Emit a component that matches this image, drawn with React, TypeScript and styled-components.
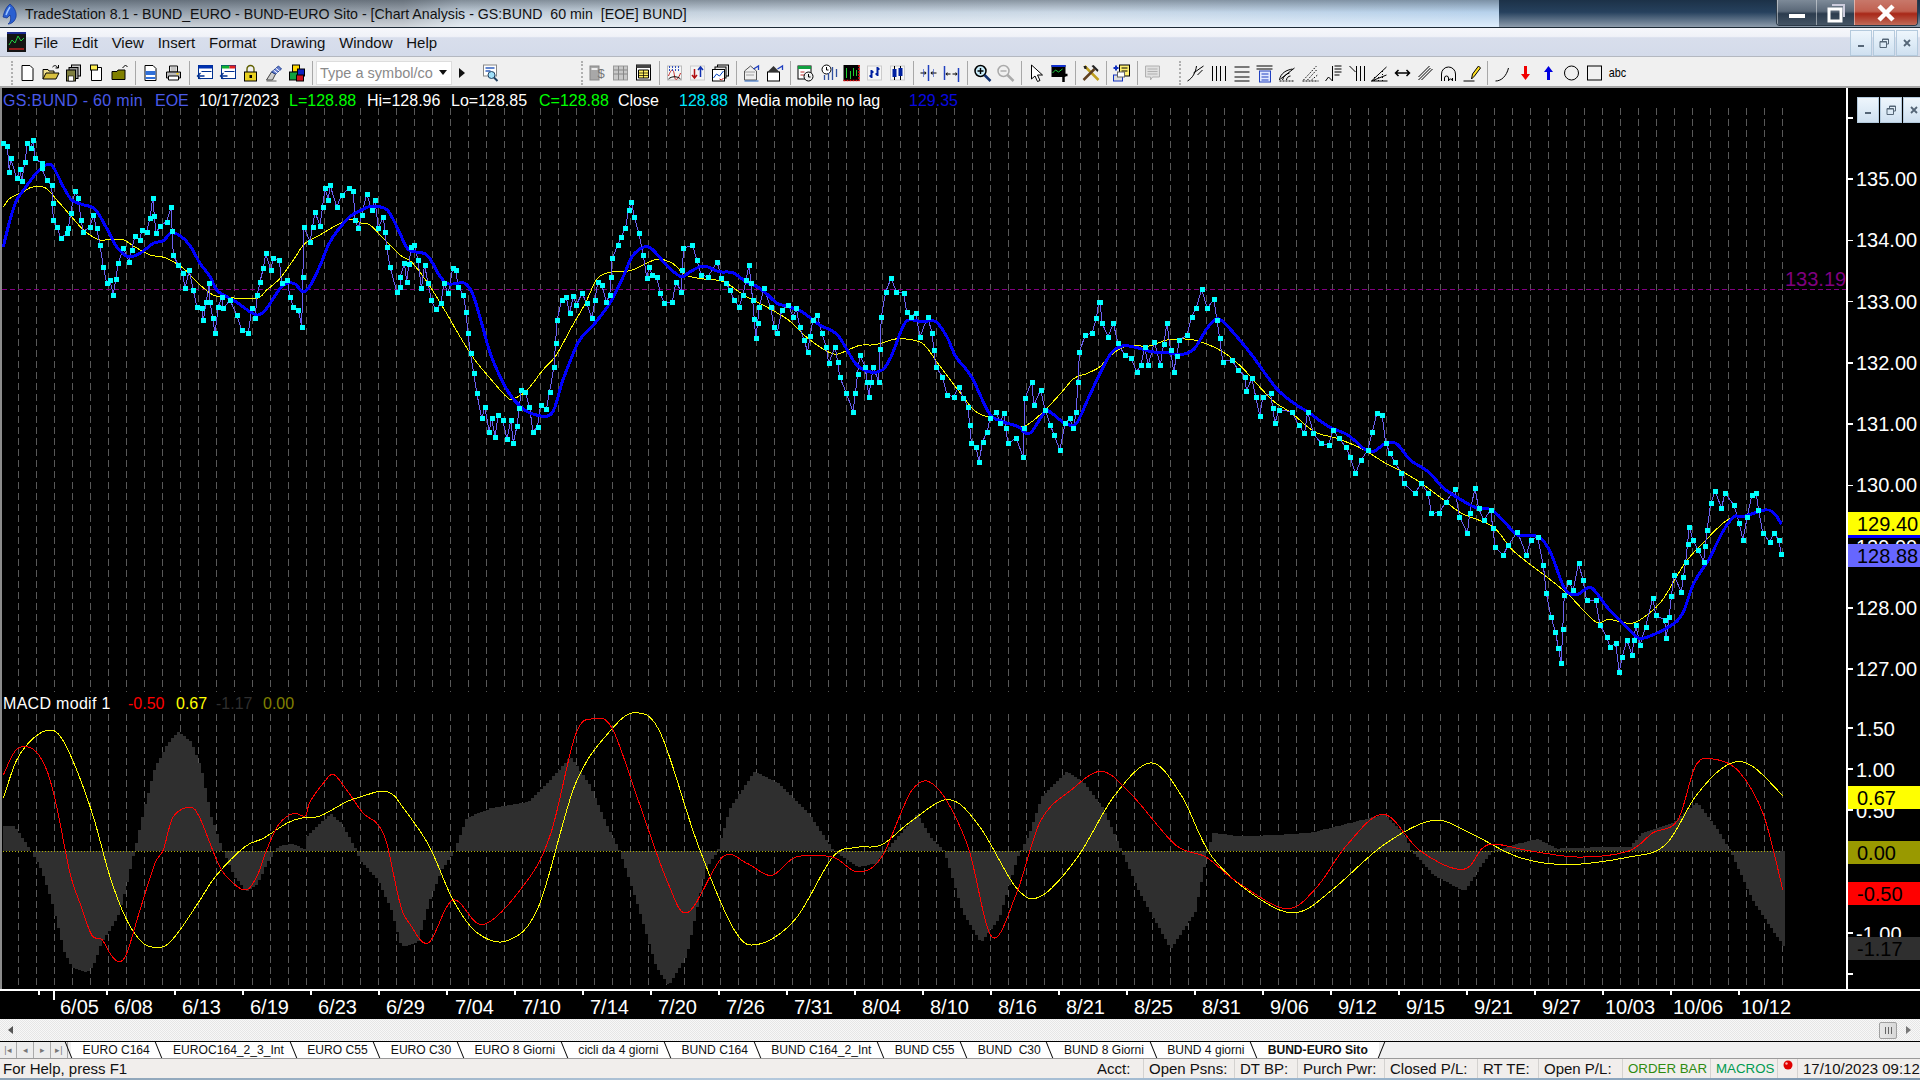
import React from 'react';
import styled, { createGlobalStyle } from 'styled-components';

const GlobalStyle = createGlobalStyle`
  html, body { margin: 0; padding: 0; background: #000; }
  body { font-family: "Liberation Sans", Arial, sans-serif; overflow: hidden; }
`;

// ---- chart data, read off the screen in three crops of different scale ----
type Pt = [number, number];
const crop = (ox: number, oy: number, sx: number, sy: number) => (flat: number[]): Pt[] => {
  const out: Pt[] = [];
  for (let i = 0; i < flat.length; i += 2) out.push([ox + flat[i] / sx, oy + flat[i + 1] / sy]);
  return out;
};
const left = crop(0, 120, 3, 3);
const mid = crop(400, 160, 2.24, 3);
const right = crop(1100, 260, 2.24, 3);
const macdLeft = crop(0, 690, 3, 3);
const macdRest = crop(0, 0, 1 / 1.2245, 1 / 1.2245);

const PRICE: Pt[] = [
  ...left([10,70,22,78,28,155,32,115,50,175,60,148,65,183,75,125,82,70,92,85,100,60,105,115,125,130,125,145,140,180,155,195,160,300,170,320,183,355,200,340,205,325,212,280,225,212,235,235,243,300,250,335,270,320,280,285,290,325,300,375,310,440,320,490,330,480,340,525,355,430,370,385,388,425,395,390,405,348,420,360,425,330,440,335,450,295,458,233,468,340,480,318,500,305,513,262,520,405,535,435,548,460,555,505,568,450,580,510,590,560,605,565,610,600,628,490,630,545,645,640,655,560,665,530,670,565,690,540,710,585,725,630,745,640,755,565,765,595,772,525,780,485,790,445,797,400,812,450,820,415,838,420,845,490,862,480,870,530,880,560,895,570,905,620,912,320,930,365,945,275,960,318,975,205,985,240,990,195,1010,260,1025,225,1048,205,1060,212,1065,300,1075,325,1085,285,1100,222,1115,270,1125,240,1135,325,1150,290,1160,380,1170,440,1190,515,1200,500]),
  ...mid([0,350,10,310,15,365,25,260,32,255,40,300,48,385,55,315,70,420,80,448,92,430,98,370,108,400,118,325,125,330,130,380,142,405,148,455,152,520,158,580,172,700,183,775,190,742,200,815,205,775,213,830,220,765,230,780,240,838,248,780,254,848,262,798,272,690,280,695,290,740,298,815,308,800,315,735,328,748,335,695,345,620,352,480,362,420,372,410,380,460,388,408,395,435,408,400,418,430,430,475,443,365,452,375,462,425,470,405,475,295,488,255,495,230,505,205,512,150,518,125,525,170,535,220,545,285,553,355,558,320,565,345,575,350,583,400,592,430,610,425,618,365,630,395,635,265,655,255,665,300,675,345,690,350,710,305,720,355,730,370,740,390,748,420,760,440,768,405,782,315,790,420,797,535,805,440,815,385,830,440,838,500,845,520,855,450,870,435,880,470,888,445,895,500,905,540,913,575,925,480,935,465,945,520,955,560,960,610,975,560,985,650,1000,700,1015,755,1020,700,1030,585,1042,620,1050,710,1060,620,1072,665,1078,470,1088,395,1100,355,1112,395,1128,400,1135,455,1145,470,1155,460,1165,530,1182,470,1192,520,1200,620,1215,650,1225,705,1240,710,1252,680,1262,715,1272,740,1280,850,1290,860,1297,905,1305,845,1315,815,1322,775,1335,755,1345,790,1352,760,1362,850,1380,835,1396,890,1400,715,1415,665,1420,735,1435,690,1445,750,1457,795,1465,825,1478,870,1490,790,1500,775,1508,805,1515,755,1522,575,1535,525,1550,520,1560,475,1565,425]),
  ...right([0,125,5,190,18,230,30,190,40,250,55,285,70,295,82,335,92,315,100,262,108,315,122,245,135,315,150,190,158,270,165,335,178,240,195,225,205,170,215,145,228,88,240,145,255,118,262,180,268,235,275,305,295,300,310,330,325,350,328,393,340,355,358,468,365,410,382,400,392,490,400,450,430,455,445,495,458,520,465,455,478,520,495,550,512,555,522,510,535,535,550,560,560,590,572,640,585,600,600,570,620,460,632,465,640,550,650,580,660,605,675,640,680,670,705,700,720,670,735,700,742,760,760,758,775,725,795,688,805,770,823,820,828,760,840,685,848,745,860,780,875,750,885,860,903,885,915,855,935,815,955,885,965,840,980,830,993,915,1000,1000,1010,1070,1020,1115,1033,1210,1040,1005,1050,965,1060,990,1072,910,1082,960,1090,1020,1110,1020,1120,1095,1135,1130,1142,1160,1155,1150,1163,1235,1170,1190,1180,1140,1192,1185,1200,1095,1210,1155,1222,1100,1238,1015,1245,1065,1265,1080,1268,1135,1275,1070,1285,945,1302,995,1312,905,1320,800,1328,840,1340,870,1352,905,1360,810,1368,730,1378,692,1392,745,1400,700,1420,735,1432,790,1440,840,1450,770,1460,705,1470,700,1475,750,1485,820,1500,845,1510,820,1520,840,1526,882]),
];

const BLUE_MA: Pt[] = [
  ...left([10,380,30,300,50,240,75,205,100,170,130,140,150,133,165,150,190,200,215,240,245,253,285,268,320,325,350,380,385,410,420,400,460,370,490,362,516,338,550,355,575,385,600,430,630,470,650,510,680,530,710,547,750,575,775,585,800,565,840,505,860,490,885,492,910,515,935,490,965,425,985,375,1010,335,1050,290,1085,270,1110,260,1155,265,1175,290,1200,340]),
  ...mid([20,270,60,285,90,350,110,372,145,370,165,410,185,500,205,590,240,690,270,740,300,763,340,760,365,660,400,545,430,500,470,430,500,350,520,290,545,262,565,268,600,320,630,350,650,335,680,318,715,335,745,338,775,365,800,380,820,400,845,430,870,440,900,455,940,495,980,525,1020,610,1050,635,1080,630,1100,590,1125,505,1140,480,1170,485,1200,485,1225,530,1245,590,1280,650,1320,760,1350,785,1385,800,1400,818,1415,815,1445,755,1460,760,1490,790,1515,790,1540,720,1568,640]),
  ...right([25,280,50,258,80,262,115,275,150,278,180,284,210,268,240,205,263,176,290,205,340,285,395,385,440,435,465,455,510,498,555,525,590,565,612,575,640,550,665,552,695,600,735,635,770,685,800,712,840,742,880,752,930,820,950,827,985,832,1010,880,1035,970,1050,1000,1070,1003,1095,982,1110,995,1135,1040,1160,1075,1190,1115,1215,1135,1275,1100,1305,1060,1330,970,1365,895,1395,815,1420,770,1440,770,1490,750,1510,760,1526,792]),
];

const YELLOW_MA: Pt[] = [
  ...left([10,262,30,235,70,215,95,202,135,203,175,245,210,285,250,330,270,345,300,360,365,358,400,378,450,405,495,413,550,445,595,490,640,525,690,533,770,535,800,510,840,475,880,420,915,370,960,345,1010,315,1055,297,1085,310,1110,315,1150,355,1200,405]),
  ...mid([25,305,60,365,100,450,130,520,165,595,205,660,240,712,255,716,285,690,320,630,350,585,385,500,415,430,440,360,465,338,500,335,525,328,575,298,610,310,640,345,680,357,725,365,770,405,820,440,870,480,905,525,945,565,975,583,1000,572,1030,556,1065,554,1100,540,1125,536,1170,550,1205,610,1250,690,1290,755,1330,775,1385,800,1410,790,1445,750,1480,700,1510,655,1540,640,1568,620]),
  ...right([25,285,60,258,110,258,150,240,200,238,240,252,280,280,320,325,350,370,390,425,430,460,480,515,530,535,585,565,640,610,680,637,720,670,770,720,810,760,880,800,920,865,960,910,1000,950,1050,1005,1110,1085,1140,1078,1190,1090,1225,1065,1260,1020,1310,910,1350,850,1395,790,1420,770,1440,768,1490,750]),
];

const HIST: Pt[] = [
  ...macdLeft([3,408,40,408,60,440,90,483,120,540,150,630,190,790,215,835,255,848,275,830,300,760,350,680,375,590,400,480,430,350,460,235,500,160,530,125,570,155,600,235,630,380,665,483,700,560,735,605,770,580,800,515,830,470,870,460,910,478,915,440,950,405,990,372,1020,400,1060,470,1075,510,1130,570,1170,660,1200,770]),
  ...macdRest([340,770,350,735,360,710,370,695,380,668,400,660,430,655,450,635,465,618,480,640,495,675,505,695,520,740,535,790,545,805,560,780,575,710,585,695,595,660,615,630,635,640,660,665,680,695,700,708,715,705,722,695,735,680,748,665,760,685,770,695,785,745,800,770,815,750,830,700,840,680,850,650,870,630,885,640,900,660,915,695,930,730,955,775,975,745,985,695,990,680,1010,683,1040,682,1070,680,1090,675,1130,665,1145,680,1152,695,1170,715,1195,728,1210,705,1218,695,1235,690,1255,685,1270,693,1300,692,1330,692,1340,680,1365,672,1385,655,1400,675,1412,695,1430,735,1455,772]),
];

const MACD_RED: Pt[] = [
  ...macdLeft([10,255,50,178,100,178,140,240,170,350,210,550,240,640,275,735,305,748,330,790,355,815,380,790,420,660,465,520,490,480,520,380,570,352,600,385,650,510,680,560,735,600,770,560,800,480,835,405,880,370,915,378,930,335,970,280,1000,253,1040,300,1090,370,1130,400,1160,460,1200,640]),
  ...macdRest([335,755,350,770,370,735,395,755,430,720,450,680,470,600,485,587,500,595,520,650,545,720,562,745,590,700,610,705,630,715,650,700,680,700,700,712,720,700,745,645,765,643,790,690,810,765,830,730,850,670,875,645,900,630,925,650,960,690,985,700,1010,720,1050,742,1075,725,1100,690,1130,665,1160,695,1195,710,1215,690,1250,695,1290,700,1330,695,1350,680,1370,670,1385,625,1400,620,1420,630,1440,665,1456,727]),
];

const MACD_YELLOW: Pt[] = [
  ...macdLeft([10,325,50,210,100,145,150,120,185,145,230,240,280,380,330,560,380,690,430,760,470,772,500,765,540,720,600,630,650,555,735,470,790,445,860,400,900,385,960,378,1040,335,1090,318,1145,303,1180,315,1200,340]),
  ...macdRest([350,690,370,735,390,762,415,768,440,740,470,640,500,595,520,582,540,600,570,690,600,760,620,771,650,750,680,700,700,692,720,690,745,670,775,653,800,675,830,725,850,732,880,700,910,650,940,623,965,650,990,700,1030,735,1060,745,1090,725,1130,690,1170,670,1200,680,1240,700,1280,706,1330,700,1360,690,1385,650,1410,625,1430,625,1456,650]),
];

const poly = (pts: Pt[]) => pts.map(([x, y]) => `${x.toFixed(1)},${y.toFixed(1)}`).join(' ');

// catmull-rom through the readings, the averages have no corners in the reference
const smooth = (pts: Pt[]) => {
  let d = `M${pts[0][0].toFixed(1)} ${pts[0][1].toFixed(1)}`;
  for (let i = 0; i < pts.length - 1; i++) {
    const p0 = pts[Math.max(i - 1, 0)];
    const p1 = pts[i];
    const p2 = pts[i + 1];
    const p3 = pts[Math.min(i + 2, pts.length - 1)];
    const c1x = p1[0] + (p2[0] - p0[0]) / 6;
    const c1y = p1[1] + (p2[1] - p0[1]) / 6;
    const c2x = p2[0] - (p3[0] - p1[0]) / 6;
    const c2y = p2[1] - (p3[1] - p1[1]) / 6;
    d += `C${c1x.toFixed(1)} ${c1y.toFixed(1)} ${c2x.toFixed(1)} ${c2y.toFixed(1)} ${p2[0].toFixed(1)} ${p2[1].toFixed(1)}`;
  }
  return d;
};

const priceY = (p: number) => 179 + (135 - p) * 61.25;
const macdY = (v: number) => 851 - v * 82;
const ZERO = macdY(0);

// closes: one dot per reading, plus one half way on the longer legs
const priceDots = (): Pt[] => {
  const out: Pt[] = [];
  PRICE.forEach((p, i) => {
    out.push(p);
    const n = PRICE[i + 1];
    if (n && Math.hypot(n[0] - p[0], n[1] - p[1]) > 30) out.push([(p[0] + n[0]) / 2, (p[1] + n[1]) / 2]);
  });
  return out;
};

// the histogram is a column every 3px, that is what gives it the stepped edge
const histPath = () => {
  let d = '';
  let seg = 0;
  for (let x = 3; x <= 1782; x += 3) {
    while (seg < HIST.length - 2 && HIST[seg + 1][0] < x) seg++;
    const [x0, y0] = HIST[seg];
    const [x1, y1] = HIST[seg + 1];
    const y = Math.round(y0 + ((y1 - y0) * (x - x0)) / (x1 - x0));
    d += `M${x} ${ZERO}V${y}h3V${ZERO}z`;
  }
  return d;
};

const GRID_X = Array.from({ length: 99 }, (_, i) => (i + 1) * 18);
const TIME_LABELS: [string, number][] = [
  ['6/05', 60], ['6/08', 114], ['6/13', 182], ['6/19', 250], ['6/23', 318], ['6/29', 386], ['7/04', 455], ['7/10', 522],
  ['7/14', 590], ['7/20', 658], ['7/26', 726], ['7/31', 794], ['8/04', 862], ['8/10', 930], ['8/16', 998], ['8/21', 1066],
  ['8/25', 1134], ['8/31', 1202], ['9/06', 1270], ['9/12', 1338], ['9/15', 1406], ['9/21', 1474], ['9/27', 1542],
  ['10/03', 1605], ['10/06', 1673], ['10/12', 1741],
];
const TIME_TICKS = [39, ...Array.from({ length: 25 }, (_, i) => 107 + i * 68)];

// ---- window chrome ----
const Page = styled.div`
  width: 1920px;
  height: 1080px;
  display: flex;
  flex-direction: column;
  overflow: hidden;
  background: #f0f0f0;
`;

const TitleBar = styled.div`
  height: 27px;
  flex: none;
  display: flex;
  align-items: center;
  border-bottom: 1px solid #1d2a36;
  background:
    linear-gradient(180deg, rgba(30,40,50,.42) 0, rgba(120,130,140,.12) 45%, rgba(255,255,255,.5) 100%),
    linear-gradient(90deg, #96a4b2 0, #9fa8b2 21%, #c9d6e2 24%, #d6e4f2 55%, #bfdcf8 77%, #bfdcf8 78.05%, #1b3857 78.1%, #1b3857 100%);
`;

const AppIcon = styled.svg`
  width: 18px;
  height: 22px;
  margin-left: 1px;
  flex: none;
`;

const TitleText = styled.span`
  margin-left: 6px;
  font-size: 14.2px;
  color: #111;
  white-space: pre;
  flex: 1;
`;

const WinButtons = styled.div`
  display: flex;
  height: 25px;
  margin: 0 2px 2px 0;
  align-self: flex-start;
  border: 1px solid #2c3a48;
  border-top: 0;
  border-radius: 0 0 4px 4px;
  overflow: hidden;
`;

const WinButton = styled.div<{ $w: number; $close?: boolean }>`
  width: ${(p) => p.$w}px;
  display: flex;
  align-items: center;
  justify-content: center;
  border-left: 1px solid rgba(255,255,255,.45);
  background: ${(p) =>
    p.$close
      ? 'linear-gradient(180deg, #c8786a 0, #c06050 45%, #a82818 55%, #c06a58 100%)'
      : 'linear-gradient(180deg, #7d8a98 0, #5a6878 45%, #2c3c4e 55%, #445464 100%)'};
`;

const MenuBar = styled.div`
  height: 28px;
  flex: none;
  display: flex;
  align-items: center;
  border-bottom: 1px solid #b4b8c0;
  background: linear-gradient(180deg, #f6f7fb 0, #f0f2f8 30%, #d8deec 35%, #d4dbea 100%);
`;

const MenuIcon = styled.svg`
  width: 19px;
  height: 20px;
  margin-left: 7px;
  flex: none;
`;

const MenuItems = styled.div`
  display: flex;
  gap: 13.8px;
  margin-left: 8px;
  flex: 1;
`;

const MenuItem = styled.span`
  font-size: 15px;
  color: #111;
`;

const MdiButtons = styled.div`
  display: flex;
  gap: 1px;
  margin-right: 2px;
  align-self: flex-start;
  margin-top: 2px;
`;

const MdiButton = styled.div`
  width: 22px;
  height: 26px;
  display: flex;
  align-items: center;
  justify-content: center;
  border: 1px solid #b4cadd;
  box-sizing: border-box;
  background: linear-gradient(180deg, #eef6fc 0, #dfecf7 50%, #cfe0f0 100%);
`;

const Toolbar = styled.div`
  height: 27px;
  padding-top: 2px;
  flex: none;
  display: flex;
  align-items: center;
  background: #f0f0f0;
  border-bottom: 2px solid #a6a6a6;
`;

const ToolGroup = styled.div<{ $ml: number }>`
  display: flex;
  align-items: center;
  margin-left: ${(p) => p.$ml}px;
`;

const Grip = styled.i`
  width: 0;
  height: 24px;
  margin-right: 3px;
  border-left: 2px dotted #b0b0b0;
`;

const Tool = styled.svg`
  width: 20px;
  height: 20px;
  padding: 0 1.5px;
  flex: none;
`;

const Sep = styled.i`
  width: 1px;
  height: 24px;
  margin: 0 3.5px;
  background: #a8a8a8;
  flex: none;
`;

const SymbolBox = styled.div`
  width: 136px;
  height: 24px;
  display: flex;
  align-items: center;
  justify-content: space-between;
  padding: 0 4px 0 3px;
  box-sizing: border-box;
  border: 1px solid #ddd;
  background: #fff;
  font-size: 14.5px;
  color: #8a8a8a;
`;

const ComboArrow = styled.i`
  width: 0;
  height: 0;
  border: 4.5px solid transparent;
  border-top: 5px solid #111;
  border-bottom: 0;
`;

const GoArrow = styled.i`
  width: 0;
  height: 0;
  margin-left: 7px;
  margin-right: 13px;
  border: 5.5px solid transparent;
  border-left: 6px solid #111;
  border-right: 0;
`;

// ---- chart ----
const ChartArea = styled.div`
  position: relative;
  height: 931px;
  flex: none;
  background: #000;
`;

const ChartSvg = styled.svg`
  display: block;
  width: 1920px;
  height: 931px;
  background: #000;
  font-family: "Liberation Sans", Arial, sans-serif;
  .grid { stroke: #585858; stroke-width: 1; stroke-dasharray: 7 4; shape-rendering: crispEdges; }
  .axis { stroke: #fff; stroke-width: 1.5; fill: none; shape-rendering: crispEdges; }
  .level { stroke: #800080; stroke-width: 1; stroke-dasharray: 5 3; shape-rendering: crispEdges; }
  .zero { stroke: #b0b000; stroke-width: 1; stroke-dasharray: 1 2; shape-rendering: crispEdges; }
  .price { fill: none; stroke: #6a60f0; stroke-width: 1; shape-rendering: crispEdges; }
  .dot { fill: #00ffff; shape-rendering: crispEdges; }
  .blue { fill: none; stroke: #0000ff; stroke-width: 3; stroke-linejoin: round; shape-rendering: crispEdges; }
  .thin-yellow { fill: none; stroke: #ffff00; stroke-width: 1; shape-rendering: crispEdges; }
  .thin-red { fill: none; stroke: #ff0000; stroke-width: 1; shape-rendering: crispEdges; }
  .hist { fill: #2f2f2f; shape-rendering: crispEdges; }
  .label { fill: #fff; font-size: 20px; }
  .badge-text { fill: #000; font-size: 20px; }
  .level-text { fill: #800080; font-size: 20px; }
`;

const Legend = styled.div<{ $top: number }>`
  position: absolute;
  left: 3px;
  top: ${(p) => p.$top}px;
  display: flex;
  font-size: 16px;
  line-height: 18px;
  white-space: pre;
`;

const LegendItem = styled.span<{ $w?: number; $c: string; $wide?: boolean }>`
  color: ${(p) => p.$c};
  ${(p) => (p.$w ? `width: ${p.$w}px;` : '')}
  ${(p) => (p.$wide ? 'letter-spacing: .3px;' : '')}
  flex: none;
`;

const PaneButtons = styled.div`
  position: absolute;
  right: -5px;
  top: 9px;
  display: flex;
  gap: 1px;
`;

const ScrollBar = styled.div`
  height: 22px;
  flex: none;
  display: flex;
  align-items: center;
  justify-content: space-between;
  background: repeating-conic-gradient(#e6e6e6 0 25%, #f8f8f8 0 50%) 0 0 / 2px 2px;
`;

const ScrollRight = styled.div`
  display: flex;
  align-items: center;
  gap: 9px;
  margin-right: 9px;
`;

const ScrollLeftArrow = styled.i`
  width: 0;
  height: 0;
  margin-left: 8px;
  border: 4.5px solid transparent;
  border-right: 5px solid #555;
  border-left: 0;
`;

const ScrollRightArrow = styled.i`
  width: 0;
  height: 0;
  border: 4.5px solid transparent;
  border-left: 5px solid #777;
  border-right: 0;
`;

const ScrollThumb = styled.div`
  width: 18px;
  height: 17px;
  box-sizing: border-box;
  border: 1px solid #a0a0a0;
  border-radius: 2px;
  background: linear-gradient(90deg, #e8e8e8, #d8d8d8);
  display: flex;
  align-items: center;
  justify-content: center;
  gap: 2px;
  i { width: 1px; height: 7px; background: #666; }
`;

const TabStrip = styled.div`
  height: 16px;
  flex: none;
  display: flex;
  align-items: stretch;
  border-top: 1px solid #000;
  border-bottom: 1px solid #9a9a9a;
  background: #f0f0f0;
`;

const TabNav = styled.div`
  width: 69px;
  flex: none;
  display: flex;
  background: #ececec;
`;

const TabNavButton = styled.div`
  width: 17px;
  display: flex;
  align-items: center;
  justify-content: center;
  box-sizing: border-box;
  border-right: 1px solid #aaa;
  color: #777;
  font-size: 9px;
`;

const TabRow = styled.div`
  display: flex;
  margin-left: 2px;
`;

const Tab = styled.div<{ $active?: boolean }>`
  position: relative;
  padding: 0 11.6px;
  font-size: 12.1px;
  line-height: 16px;
  white-space: pre;
  background: #fff;
  font-weight: ${(p) => (p.$active ? 'bold' : 'normal')};
  color: #111;
  &::before {
    content: '';
    position: absolute;
    left: -3px;
    top: 0;
    width: 1px;
    height: 16px;
    background: #000;
    transform: skewX(22deg);
  }
  ${(p) =>
    p.$active
      ? `&::after {
    content: '';
    position: absolute;
    right: -3px;
    top: 0;
    width: 1px;
    height: 16px;
    background: #000;
    transform: skewX(-22deg);
  }`
      : ''}
`;

const StatusBar = styled.div`
  height: 19px;
  flex: none;
  display: flex;
  align-items: center;
  background: #f1eeec;
  font-size: 15px;
  color: #111;
`;

const StatusHelp = styled.span`
  flex: 1;
  padding-left: 3px;
`;

const StatusPanel = styled.div<{ $w: number; $plain?: boolean }>`
  width: ${(p) => p.$w}px;
  height: 19px;
  line-height: 20px;
  flex: none;
  box-sizing: border-box;
  padding-left: 5px;
  white-space: pre;
  border-left: ${(p) => (p.$plain ? '0' : '1px solid #d4d2d0')};
  svg { display: block; margin: 1px 0 0 0; }
`;

const StatusFlag = styled(StatusPanel)<{ $c: string }>`
  color: ${(p) => p.$c};
  font-size: 13.3px;
`;

const DesktopEdge = styled.div`
  height: 2px;
  flex: none;
  background: linear-gradient(90deg, #8aa0b4, #b4c8dc 40%, #9ab4cc 70%, #7a94ac);
`;

// ---- toolbar drawings, 20x20 ----
const k = { fill: 'none', stroke: '#000' };
const TOOLS: Record<string, React.ReactNode> = {
  newDoc: <path d="M4.5 2.5h8l3 3v12h-11z" fill="#fff" stroke="#000" />,
  open: (<><path d="M2.5 16V6.5h5l1 1.5h5v2" fill="#f0e090" stroke="#000" /><path d="M2.5 16l3-6h13l-3 6z" fill="#d8c040" stroke="#000" /><path d="M12 4c2-2 4-2 5 1" {...k} /><path d="M15 5h3V2" {...k} /></>),
  saveAll: (<><rect x="8" y="2" width="9" height="11" fill="#ccc" stroke="#000" /><rect x="5.500" y="4.500" width="9" height="11" fill="#999" stroke="#000" /><rect x="3" y="7" width="9" height="11" fill="#808040" stroke="#000" /><rect x="5" y="13" width="5" height="5" fill="#fff" stroke="#000" strokeWidth=".6" /></>),
  noteDoc: (<><path d="M5 6.500h5l1-2h4v13H5z" fill="#fff" stroke="#000" /><rect x="4" y="2" width="7" height="5" fill="#ffef50" stroke="#000" /></>),
  oliveFolder: (<><path d="M2.500 16.500V8.500h5l1-1.500h7v9.500z" fill="#808000" stroke="#000" /><path d="M13 5l3-3 2 2" {...k} /></>),
  preview: (<><path d="M4.500 2.500h8l3 3v12h-11z" fill="#fff" stroke="#000" /><rect x="5" y="8" width="10" height="4" fill="#3070d8" /><path d="M5 15h10" stroke="#3070d8" strokeWidth="2" /></>),
  printer: (<><path d="M6 3h8v6H6z" fill="#fff" stroke="#000" /><path d="M7 5h6M7 7h6" stroke="#888" /><path d="M3 9h14v6H3z" fill="#bbb" stroke="#000" /><path d="M5 13h10v4H5z" fill="#fff" stroke="#000" /><rect x="13" y="10" width="2" height="1.500" fill="#ffd000" /></>),
  winBlue: (<><rect x="4" y="2.500" width="14" height="13" fill="#fff" stroke="#003090" /><rect x="4" y="2.500" width="14" height="3" fill="#0030b0" /><path d="M7 8.500h10" stroke="#003090" /><path d="M10 13H3m3-3l-3 3 3 3" stroke="#003090" fill="none" strokeWidth="1.300" /></>),
  winGreen: (<><rect x="4" y="2.500" width="14" height="13" fill="#fff" stroke="#003090" /><rect x="4" y="2.500" width="8" height="3" fill="#10b030" /><rect x="12" y="2.500" width="6" height="3" fill="#e02020" /><path d="M7 8.500h10" stroke="#003090" /><path d="M10 13H3m3-3l-3 3 3 3" stroke="#003090" fill="none" strokeWidth="1.300" /></>),
  lock: (<><path d="M6.500 9V6a3.500 3.500 0 0 1 7 0v3" fill="none" stroke="#606000" strokeWidth="1.400" /><rect x="4" y="9" width="12" height="9" fill="#e8d020" stroke="#000" /><rect x="9" y="12" width="2.500" height="3" fill="#000" /></>),
  dish: (<><path d="M3 17l5-8 4 2-3 6z" fill="#ccc" stroke="#444" /><path d="M8 9l7-6 3 3-6 5z" fill="#6a80d0" stroke="#204090" /><path d="M10 7l5 4M12 5l5 4" stroke="#fff" /><path d="M3 18h10" stroke="#666" /></>),
  cubes: (<><rect x="6" y="2" width="7" height="7" fill="#ffd800" stroke="#000" /><rect x="11" y="6" width="7" height="7" fill="#1020c0" stroke="#000" /><rect x="3" y="9" width="8" height="8" fill="#10a040" stroke="#000" /><rect x="10" y="12" width="7" height="6" fill="#d01020" stroke="#000" /></>),
  findDoc: (<><rect x="4" y="2" width="13" height="11" fill="#fff" stroke="#888" /><path d="M6 5h9M6 8h5" stroke="#3060c0" strokeWidth="1.500" /><circle cx="12" cy="12" r="3.500" fill="#a0e0f8" stroke="#204060" /><path d="M14.500 14.500l3.500 3.500" stroke="#204060" strokeWidth="2" /></>),
  calcGrey: (<><rect x="2.500" y="3" width="9" height="14" fill="#a8a8a8" stroke="#888" /><text x="10" y="15" fontSize="13" fontFamily="Liberation Sans" fill="#777">$</text><path d="M4 6h6" stroke="#eee" strokeWidth="2" /></>),
  sheetGrey: (<><rect x="3" y="3" width="14" height="14" fill="#c8c8c8" stroke="#999" /><path d="M3 7h14M3 11h14M8 3v14M13 3v14" stroke="#888" /></>),
  sheetYellow: (<><rect x="3" y="2" width="14" height="15" fill="#fff" stroke="#000" /><rect x="3" y="2" width="14" height="3" fill="#444" /><path d="M5 7h10v8H5z" fill="#ffef60" stroke="#000" /><path d="M5 10h10M5 12.500h10M10 7v8" stroke="#000" strokeWidth=".7" /></>),
  wave: (<><rect x="3" y="3" width="14" height="14" fill="#f6f6f6" stroke="#bbb" /><path d="M4 13c3-8 5-8 6 0s5 0 6-3" fill="none" stroke="#c02020" /><path d="M4 16c3-3 9-3 12 0" fill="none" stroke="#000" /><path d="M5 3v6M8 3v6M11 3v6M14 3v6" stroke="#3050c0" strokeDasharray="2 1" /></>),
  updown: (<><rect x="3" y="3" width="14" height="14" fill="#f4f4f4" stroke="#ccc" /><path d="M7 6v9m-2.500-3L7 15l2.500-3" stroke="#b01010" fill="none" strokeWidth="1.500" /><path d="M13 14V4m-2.500 3L13 4l2.500 3" stroke="#1030b0" fill="none" strokeWidth="1.500" /></>),
  stack: (<><rect x="7" y="2" width="11" height="11" fill="#e8e8e8" stroke="#000" /><rect x="4.500" y="4" width="11" height="11" fill="#e8e8e8" stroke="#000" /><rect x="2" y="6.500" width="12" height="11.500" fill="#fff" stroke="#000" /><path d="M3 15l3-4 3 2 4-5" stroke="#0040c0" fill="none" /><path d="M9 16l2 1 2-2" stroke="#c01010" fill="none" /></>),
  chartHome: (<><path d="M3 17V8l6-5 6 5v9z" fill="#eee" stroke="#555" /><path d="M4 9h10M5 12h8" stroke="#555" strokeDasharray="1 1" /><path d="M12 6l5-3v4" stroke="#2040c0" fill="none" strokeWidth="1.300" /><path d="M3 18h14" stroke="#2060c0" /></>),
  chartHomeDark: (<><rect x="3" y="9" width="12" height="9" fill="#fff" stroke="#000" /><path d="M3 9l6-6 6 6z" fill="#333" /><path d="M13 6l5-3v4" stroke="#2040c0" fill="none" strokeWidth="1.300" /></>),
  calClock: (<><rect x="2.500" y="3" width="13" height="13" fill="#fff" stroke="#000" /><rect x="2.500" y="3" width="13" height="3" fill="#10a040" /><path d="M5 9h4M5 12h4" stroke="#c03030" /><circle cx="13" cy="13.500" r="4.500" fill="#eee" stroke="#000" /><path d="M13 11v3h2" stroke="#000" fill="none" /></>),
  clockBars: (<><circle cx="8" cy="6.500" r="4.500" fill="#fff" stroke="#000" /><path d="M8 4v3h2" {...k} /><path d="M6 12v5M10 10v7M14 4v13M18 6v8" stroke="#3050a0" strokeWidth="1.300" /></>),
  darkBars: (<><rect x="2" y="2" width="16" height="16" fill="#000" /><path d="M5 5v10M9 8v8M12 5v8M15 7v6" stroke="#20d030" /><path d="M2 17.500h16M17.500 2v16" stroke="#e01010" strokeWidth="1.500" strokeDasharray="2 1" /></>),
  bars: (<><rect x="3" y="3" width="14" height="14" fill="#f6f6f6" stroke="#ccc" /><path d="M7 7v8M5 13h2M7 9h2M13 4v9M11 11h2M13 6h2" stroke="#0020a0" strokeWidth="2" fill="none" /></>),
  candles: (<><rect x="3" y="3" width="14" height="14" fill="#f6f6f6" stroke="#ccc" /><path d="M7 3v14M13 3v14" stroke="#000" /><rect x="5" y="6" width="4" height="8" fill="#0020a0" /><rect x="11" y="5" width="4" height="8" fill="#0020a0" /></>),
  barsIn: (<><path d="M10 2v16" stroke="#2040c0" strokeWidth="1.500" /><path d="M2 10h4M18 10h-4" stroke="#000" /><path d="M6 8v4l2-2zM14 8v4l-2-2z" /><path d="M5 6v8M15 6v8" stroke="#2040c0" opacity=".6" /></>),
  barsOut: (<><path d="M3 3v14M17 5v14" stroke="#2040c0" strokeWidth="1.500" /><path d="M6 11h3M11 11h3" stroke="#000" /><path d="M6 9v4l-2-2zM14 9v4l2-2z" /></>),
  zoomIn: (<><circle cx="8" cy="8" r="5.500" fill="#c8ecfa" stroke="#000" strokeWidth="1.500" /><path d="M5 8h6M8 5v6" stroke="#000" strokeWidth="1.400" /><path d="M12 12l6 6" stroke="#103070" strokeWidth="2.500" /></>),
  zoomOut: (<><circle cx="8" cy="8" r="5.500" fill="#f0f0f0" stroke="#aaa" strokeWidth="1.500" /><path d="M5 8h6" stroke="#aaa" strokeWidth="1.400" /><path d="M12 12l6 6" stroke="#aaa" strokeWidth="2.500" /></>),
  pointer: <path d="M5 2v14l3.500-3 2.500 5.500 2.500-1L11 12h5z" fill="#fff" stroke="#000" />,
  darkText: (<><rect x="2" y="2" width="14" height="12" fill="#000" /><rect x="2" y="2" width="14" height="2" fill="#1030d0" /><path d="M3 10l3-3 3 2 4-3" stroke="#20d040" fill="none" /><path d="M10 12h8M14 12v7" stroke="#000" strokeWidth="2.500" /></>),
  tools: (<><path d="M4 3l14 14" stroke="#c0a020" strokeWidth="2.500" /><path d="M3 17L14 6" stroke="#604020" strokeWidth="2.500" /><path d="M11 3l6 6 1-2-5-5z" fill="#222" /><path d="M3 3l3 0 0 3-2 0z" fill="#222" /></>),
  listDoc: (<><rect x="8" y="2" width="10" height="11" fill="#ffef70" stroke="#000" /><path d="M10 5h6M10 8h6" stroke="#000" /><path d="M2 5h5M4.500 2.500v5" stroke="#1030c0" strokeWidth="2" /><rect x="2" y="12" width="9" height="6" fill="#ddd" stroke="#1030c0" /><rect x="6" y="9" width="7" height="5" fill="#fff" stroke="#666" /></>),
  noteGrey: (<><path d="M3 3h14v11h-7l-2 3v-3H3z" fill="#e0e0e0" stroke="#b0b0b0" /><path d="M5 6h10M5 8.500h10M5 11h10" stroke="#b0b0b0" /></>),
  trendCross: (<><path d="M2 18c5-3 8-8 9-15" {...k} /><path d="M8 10l10-7M12 12l5-5" {...k} /></>),
  vLines: <path d="M4 3v15M8 3v15M12 3v15M17 3v15" {...k} />,
  hLines: <path d="M3 4h15M3 9h15M3 14h15M3 18h15" {...k} />,
  calc: (<><path d="M2 3h16M2 6h16" {...k} /><rect x="5" y="8" width="11" height="11" fill="#e0e8ff" stroke="#2040c0" /><path d="M7 11h7M7 14h7M7 17h7" stroke="#2040c0" /></>),
  fanArc: (<><path d="M2 17c1-7 7-10 13-11" {...k} /><path d="M5 17c1-4 4-6 7-7M9 17c0-2 2-4 4-4M3 16l14-11" {...k} /><path d="M2 18h15" stroke="#000" strokeDasharray="2 1" /></>),
  fanDash: (<><path d="M3 17L16 3M7 17L16 7M11 17l6-5" stroke="#000" strokeDasharray="1.500 1.500" fill="none" /><path d="M2 18h16" stroke="#000" strokeDasharray="2 1" /></>),
  fibExt: (<><path d="M2 18l3-4 4 4V3" {...k} /><path d="M11 3h7M11 6h7M11 9h7M11 12h5" {...k} /></>),
  vGann: <path d="M3 3l6 6M10 3v15M14 3v15M18 3v15" {...k} />,
  fanSolid: (<><path d="M2 18L17 4M2 18l15-6M2 18h16" {...k} /><path d="M5 14v4M9 11v7M13 8v10" stroke="#000" strokeDasharray="1 2" /></>),
  arrowsH: <path d="M3 10h14M6 7l-3 3 3 3M14 7l3 3-3 3" stroke="#000" strokeWidth="1.500" fill="none" />,
  parallel: <path d="M3 14L14 3M6 17L17 6M3 17L15 5" stroke="#000" fill="none" />,
  arcs: <path d="M3 18v-7a7 7 0 0 1 14 0v7M6 18v-3a2 2 0 0 1 4 0v3a2 2 0 0 1 4 0v-3" {...k} />,
  pencil: (<><path d="M2 18h11" {...k} /><path d="M10 16l1-5 6-8 2 2-6 8z" fill="#ffe020" stroke="#000" /></>),
  curve: <path d="M3 18c6 0 11-5 13-13" stroke="#000" fill="none" />,
  arrowDown: <path d="M8.500 3h3v8h3L10 17l-4.500-6h3z" fill="#f00000" />,
  arrowUp: <path d="M8.500 17h3V9h3L10 3 5.500 9h3z" fill="#0000e0" />,
  circle: <circle cx="10" cy="10" r="7" {...k} />,
  square: <rect x="3" y="3" width="14" height="14" {...k} />,
  abc: <text x="10" y="14" textAnchor="middle" fontSize="12" fontFamily="Liberation Sans" fill="#000" transform="translate(1 0) scale(.9 1)">abc</text>,
};

const ToolIcon = ({ name }: { name: string }) => <Tool viewBox="0 0 20 20">{TOOLS[name]}</Tool>;
const ToolRun = ({ names }: { names: string[] }) => (
  <>
    {names.map((n, i) => (n === '|' ? <Sep key={i} /> : <ToolIcon key={i} name={n} />))}
  </>
);

const SmallButtonGlyphs = () => (
  <>
    <MdiButton><svg width="10" height="10" viewBox="0 0 10 10"><path d="M2 8h6" stroke="#567" strokeWidth="2" /></svg></MdiButton>
    <MdiButton><svg width="11" height="11" viewBox="0 0 11 11"><path d="M3.500 3V1h6v5H8M1 3.500h6.500v6H1z" fill="none" stroke="#567" /><path d="M1 4h6.500M3.500 1.500h6" stroke="#567" /></svg></MdiButton>
    <MdiButton><svg width="10" height="10" viewBox="0 0 10 10"><path d="M2 2l6 6M8 2L2 8" stroke="#567" strokeWidth="1.800" /></svg></MdiButton>
  </>
);

const TABS = [
  'EURO C164', 'EUROC164_2_3_Int', 'EURO C55', 'EURO C30', 'EURO 8 Giorni', 'cicli da 4 giorni',
  'BUND C164', 'BUND C164_2_Int', 'BUND C55', 'BUND  C30', 'BUND 8 Giorni', 'BUND 4 giorni',
];

const PRICE_LABELS = [135, 134, 133, 132, 131, 130, 129, 128, 127];
const PRICE_TICKS = [136, ...PRICE_LABELS];
const MACD_LABELS = [1.5, 1, 0.5, -1];
const MACD_TICKS = [1.5, 1, 0.5, 0, -0.5, -1, -1.5];

const Badge = ({ y, fill, text }: { y: number; fill: string; text: string }) => (
  <>
    <rect x="1848" y={y} width="72" height="23" fill={fill} />
    {text && <text className="badge-text" x="1857" y={y + 19}>{text}</text>}
  </>
);

const Chart = () => (
  <ChartSvg viewBox="0 88 1920 931">
    <rect x="0" y="88" width="2" height="902" fill="#8c8c8c" />
    {GRID_X.map((x) => (
      <g key={x}>
        <line className="grid" x1={x} x2={x} y1="108" y2="692" />
        <line className="grid" x1={x} x2={x} y1="714" y2="987" />
      </g>
    ))}
    <line className="level" x1="2" x2="1846" y1="289.500" y2="289.500" />
    <text className="level-text" x="1785" y="286">133.19</text>

    <path className="thin-yellow" d={smooth(YELLOW_MA)} />
    <polyline className="price" points={poly(PRICE)} />
    <path className="blue" d={smooth(BLUE_MA)} />
    {priceDots().map(([x, y], i) => (
      <rect key={i} className="dot" x={Math.round(x - 2)} y={Math.round(y - 2)} width="5" height="5" />
    ))}

    <path className="hist" d={histPath()} />
    <line className="zero" x1="3" x2="1782" y1={ZERO} y2={ZERO} />
    <path className="thin-yellow" d={smooth(MACD_YELLOW)} />
    <path className="thin-red" d={smooth(MACD_RED)} />

    <path className="axis" d="M1847 88V990M0 990H1920" />
    {PRICE_TICKS.map((p) => (
      <line key={p} className="axis" x1="1847" x2="1853" y1={priceY(p)} y2={priceY(p)} />
    ))}
    {PRICE_LABELS.map((p) => (
      <text key={p} className="label" x="1856" y={priceY(p) + 7}>{p.toFixed(2)}</text>
    ))}
    {MACD_TICKS.map((v) => (
      <line key={v} className="axis" x1="1847" x2="1853" y1={macdY(v)} y2={macdY(v)} />
    ))}
    {MACD_LABELS.map((v) => (
      <text key={v} className="label" x="1856" y={macdY(v) + 8}>{v.toFixed(2)}</text>
    ))}

    <rect x="1848" y="515" width="72" height="23" fill="#0000ff" />
    <Badge y={512} fill="#ffff00" text="129.40" />
    <Badge y={544} fill="#6666ff" text="128.88" />
    <Badge y={786} fill="#ffff00" text="0.67" />
    <Badge y={841} fill="#999900" text="0.00" />
    <Badge y={882} fill="#ff0000" text="-0.50" />
    <Badge y={937} fill="#2f2f2f" text="-1.17" />

    {TIME_TICKS.map((x) => (
      <line key={x} className="axis" x1={x} x2={x} y1="990" y2="995" />
    ))}
    <line className="axis" x1="54" x2="54" y1="990" y2="1000" />
    {TIME_LABELS.map(([t, x]) => (
      <text key={t} className="label" x={x} y="1014">{t}</text>
    ))}
  </ChartSvg>
);

export default function App() {
  return (
    <Page>
      <GlobalStyle />
      <TitleBar>
        <AppIcon viewBox="0 0 18 22">
          <path d="M9 1c4 3 7 8 6 13-1 4-4 7-8 7 3-2 3-6 2-9L6 15 2 14c1-5 3-10 7-13z" fill="#2a5fd0" stroke="#0c2f90" strokeWidth=".7" />
          <path d="M9 4c-2 3-3 5-4 8" stroke="#9cc4ff" strokeWidth="1.500" fill="none" />
        </AppIcon>
        <TitleText>TradeStation 8.1 - BUND_EURO - BUND-EURO Sito - [Chart Analysis - GS:BUND  60 min  [EOE] BUND]</TitleText>
        <WinButtons>
          <WinButton $w={38}>
            <svg width="18" height="12" viewBox="0 0 18 12"><rect x="1" y="7" width="16" height="4" fill="#fff" /></svg>
          </WinButton>
          <WinButton $w={37}>
            <svg width="20" height="20" viewBox="0 0 20 20"><path d="M6 2h12v12" fill="none" stroke="#ccd" strokeWidth="2" /><rect x="3" y="6" width="12" height="12" fill="none" stroke="#fff" strokeWidth="3" /></svg>
          </WinButton>
          <WinButton $w={62} $close>
            <svg width="20" height="20" viewBox="0 0 20 20"><path d="M3 3l14 14M17 3L3 17" stroke="#fff" strokeWidth="4.500" /></svg>
          </WinButton>
        </WinButtons>
      </TitleBar>

      <MenuBar>
        <MenuIcon viewBox="0 0 19 20">
          <rect width="19" height="20" fill="#141414" />
          <rect y="0" width="19" height="2" fill="#1c2a90" />
          <path d="M2 13l3-5 3 3 3-7 3 5 3-3" stroke="#20d040" fill="none" />
          <path d="M2 17h15" stroke="#c02020" strokeWidth="1.500" />
        </MenuIcon>
        <MenuItems>
          {['File', 'Edit', 'View', 'Insert', 'Format', 'Drawing', 'Window', 'Help'].map((m) => (
            <MenuItem key={m}>{m}</MenuItem>
          ))}
        </MenuItems>
        <MdiButtons><SmallButtonGlyphs /></MdiButtons>
      </MenuBar>

      <Toolbar>
        <ToolGroup $ml={11}>
          <Grip />
          <ToolRun names={['newDoc', 'open', 'saveAll', 'noteDoc', 'oliveFolder', '|', 'preview', 'printer', '|', 'winBlue', 'winGreen', 'lock', 'dish', 'cubes', '|']} />
          <SymbolBox>Type a symbol/co<ComboArrow /></SymbolBox>
          <GoArrow />
          <ToolIcon name="findDoc" />
        </ToolGroup>
        <ToolGroup $ml={80}>
          <Grip />
          <ToolRun names={['calcGrey', 'sheetGrey', 'sheetYellow', '|', 'wave', 'updown', 'stack', '|', 'chartHome', 'chartHomeDark', '|', 'calClock', 'clockBars', 'darkBars', 'bars', 'candles', '|', 'barsIn', 'barsOut', '|', 'zoomIn', 'zoomOut', '|', 'pointer', 'darkText', '|', 'tools', '|', 'listDoc', '|', 'noteGrey']} />
        </ToolGroup>
        <ToolGroup $ml={15}>
          <Grip />
          <ToolRun names={['trendCross', 'vLines', 'hLines', 'calc', 'fanArc', 'fanDash', 'fibExt', 'vGann', 'fanSolid', 'arrowsH', 'parallel', 'arcs', 'pencil', '|', 'curve', 'arrowDown', 'arrowUp', 'circle', 'square', 'abc']} />
        </ToolGroup>
      </Toolbar>

      <ChartArea>
        <Chart />
        <Legend $top={4}>
          <LegendItem $w={152} $c="#4a5ae8" $wide>GS:BUND - 60 min</LegendItem>
          <LegendItem $w={44} $c="#4a5ae8">EOE</LegendItem>
          <LegendItem $w={90} $c="#fff">10/17/2023</LegendItem>
          <LegendItem $w={78} $c="#00ff00">L=128.88</LegendItem>
          <LegendItem $w={84} $c="#fff">Hi=128.96</LegendItem>
          <LegendItem $w={88} $c="#fff">Lo=128.85</LegendItem>
          <LegendItem $w={79} $c="#00ff00">C=128.88</LegendItem>
          <LegendItem $w={61} $c="#fff">Close</LegendItem>
          <LegendItem $w={58} $c="#00e8ff">128.88</LegendItem>
          <LegendItem $w={172} $c="#fff">Media mobile no lag</LegendItem>
          <LegendItem $c="#0808e0">129.35</LegendItem>
        </Legend>
        <Legend $top={607}>
          <LegendItem $w={125} $c="#fff" $wide>MACD modif 1</LegendItem>
          <LegendItem $w={48} $c="#ff0000">-0.50</LegendItem>
          <LegendItem $w={40} $c="#ffff00">0.67</LegendItem>
          <LegendItem $w={47} $c="#2f2f2f">-1.17</LegendItem>
          <LegendItem $c="#808000">0.00</LegendItem>
        </Legend>
        <PaneButtons><SmallButtonGlyphs /></PaneButtons>
      </ChartArea>

      <ScrollBar>
        <ScrollLeftArrow />
        <ScrollRight>
          <ScrollThumb><i /><i /><i /></ScrollThumb>
          <ScrollRightArrow />
        </ScrollRight>
      </ScrollBar>

      <TabStrip>
        <TabNav>
          {['|◂', '◂', '▸', '▸|'].map((g) => (
            <TabNavButton key={g}>{g}</TabNavButton>
          ))}
        </TabNav>
        <TabRow>
          {TABS.map((t) => <Tab key={t}>{t}</Tab>)}
          <Tab $active>BUND-EURO Sito</Tab>
        </TabRow>
      </TabStrip>

      <StatusBar>
        <StatusHelp>For Help, press F1</StatusHelp>
        <StatusPanel $w={51} $plain>Acct:</StatusPanel>
        <StatusPanel $w={91}>Open Psns:</StatusPanel>
        <StatusPanel $w={63}>DT BP:</StatusPanel>
        <StatusPanel $w={87}>Purch Pwr:</StatusPanel>
        <StatusPanel $w={93}>Closed P/L:</StatusPanel>
        <StatusPanel $w={61}>RT TE:</StatusPanel>
        <StatusPanel $w={84}>Open P/L:</StatusPanel>
        <StatusFlag $w={88} $c="#2e8b10">ORDER BAR</StatusFlag>
        <StatusFlag $w={67} $c="#009a50">MACROS</StatusFlag>
        <StatusPanel $w={20}>
          <svg width="12" height="12" viewBox="0 0 12 12">
            <circle cx="5" cy="5" r="4.500" fill="#e00000" />
            <circle cx="3.500" cy="3.500" r="1.200" fill="#ffb0b0" />
          </svg>
        </StatusPanel>
        <StatusPanel $w={123}>17/10/2023 09:12</StatusPanel>
      </StatusBar>
      <DesktopEdge />
    </Page>
  );
}
